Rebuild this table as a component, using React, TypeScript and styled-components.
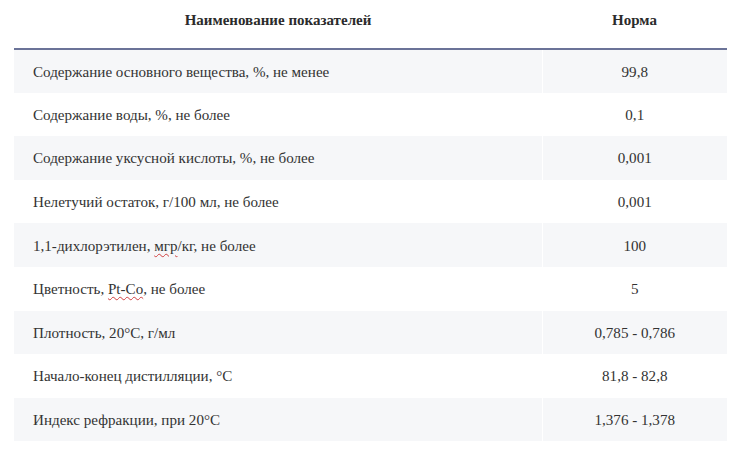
import React from "react";
import styled, { createGlobalStyle } from "styled-components";

const Global = createGlobalStyle`
  html, body { margin: 0; padding: 0; background: #ffffff; }
  body { font-family: "Liberation Serif", "Times New Roman", serif; color: #333333; }
`;

const Page = styled.div`
  padding: 0 16px 0 14px;
  width: 743px;
  box-sizing: border-box;
`;

const Table = styled.table`
  width: 713px;
  border-collapse: collapse;
  font-size: 15.1px;
`;

const HeadCell = styled.th<{ $narrow?: boolean }>`
  font-weight: bold;
  font-size: 15px;
  color: #2b2b2b;
  text-align: center;
  height: 49px;
  padding: 0 0 8px;
  box-sizing: border-box;
  border-bottom: 2px solid #6b7398;
  width: ${(p) => (p.$narrow ? "185px" : "auto")};
`;

const Row = styled.tr<{ $shade: boolean }>`
  background: ${(p) => (p.$shade ? "#f6f7f9" : "#ffffff")};
  height: 43.6px;
`;

const NameCell = styled.td`
  padding: 2px 0 0 19px;
  text-align: left;
  border-right: 1px solid #ffffff;
`;

const ValueCell = styled.td`
  padding: 2px 0 0;
  text-align: center;
`;

const Squiggle = styled.span`
  text-decoration: underline wavy #d04040;
  text-decoration-thickness: 1px;
  text-underline-offset: 2px;
`;

const rows: { name: React.ReactNode; value: string }[] = [
  { name: "Содержание основного вещества, %, не менее", value: "99,8" },
  { name: "Содержание воды, %, не более", value: "0,1" },
  { name: "Содержание уксусной кислоты, %, не более", value: "0,001" },
  { name: "Нелетучий остаток, г/100 мл, не более", value: "0,001" },
  {
    name: (
      <>
        1,1-дихлорэтилен, <Squiggle>мгр</Squiggle>/кг, не более
      </>
    ),
    value: "100",
  },
  {
    name: (
      <>
        Цветность, <Squiggle>Pt-Co</Squiggle>, не более
      </>
    ),
    value: "5",
  },
  { name: "Плотность, 20°C, г/мл", value: "0,785 - 0,786" },
  { name: "Начало-конец дистилляции, °C", value: "81,8 - 82,8" },
  { name: "Индекс рефракции, при 20°C", value: "1,376 - 1,378" },
];

export default function App() {
  return (
    <Page>
      <Global />
      <Table>
        <thead>
          <tr>
            <HeadCell>Наименование показателей</HeadCell>
            <HeadCell $narrow>Норма</HeadCell>
          </tr>
        </thead>
        <tbody>
          {rows.map((r, i) => (
            <Row key={i} $shade={i % 2 === 0}>
              <NameCell>{r.name}</NameCell>
              <ValueCell>{r.value}</ValueCell>
            </Row>
          ))}
        </tbody>
      </Table>
    </Page>
  );
}
